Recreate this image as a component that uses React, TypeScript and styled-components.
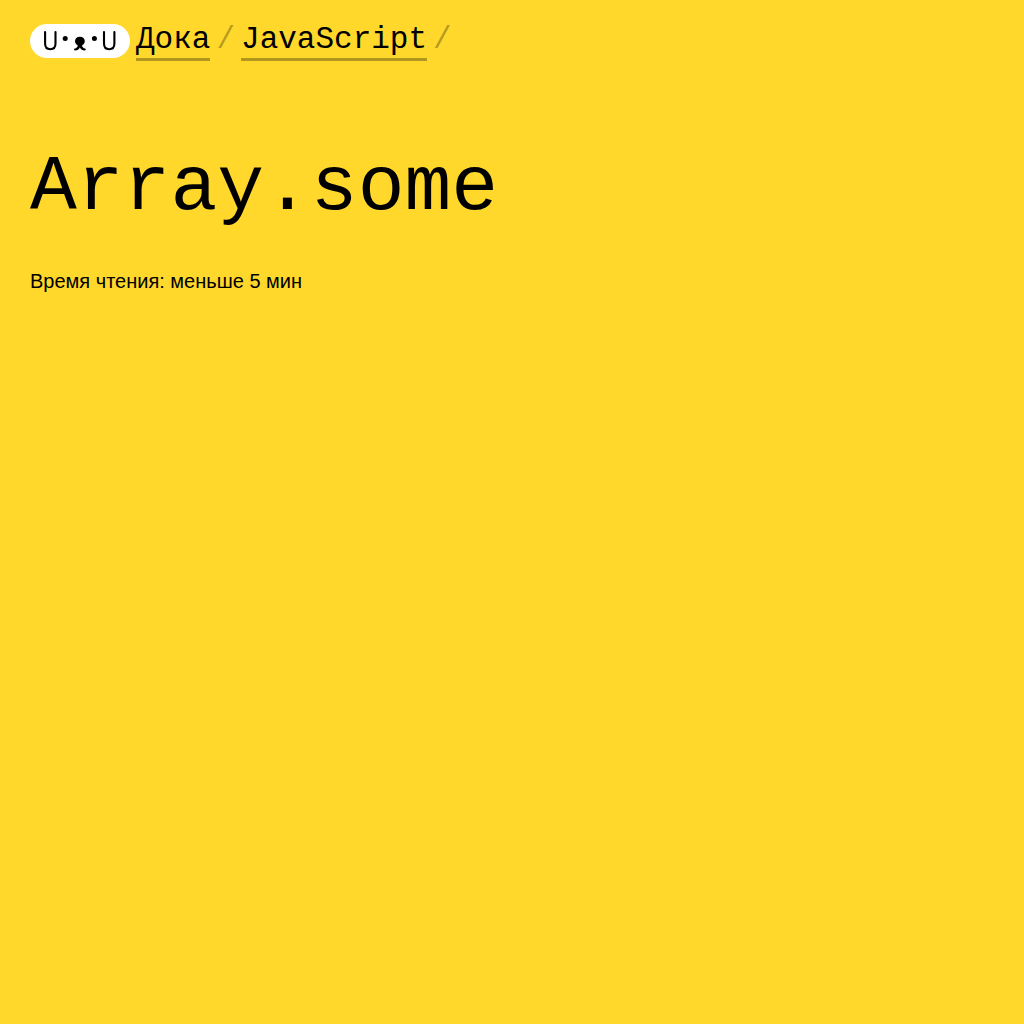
import React from "react";
import styled, { createGlobalStyle } from "styled-components";

const GlobalStyle = createGlobalStyle`
  *, *::before, *::after { box-sizing: border-box; }
  body {
    margin: 0;
    background: #ffd82b;
    color: #000;
    font-family: "Liberation Sans", Arial, sans-serif;
  }
`;

const Page = styled.div`
  min-height: 100vh;
  padding: 24px 30px;
`;

const Breadcrumbs = styled.nav`
  display: flex;
  flex-wrap: wrap;
  align-items: flex-start;
  gap: 6px;
  font-family: "Liberation Mono", "Courier New", monospace;
  font-size: 31px;
  line-height: 32px;
`;

const LogoLink = styled.a`
  display: flex;
  width: 100px;
  height: 34px;
  border-radius: 17px;
  background: #fff;
  color: #000;
`;

const Crumb = styled.a`
  padding-bottom: 2px;
  color: inherit;
  text-decoration: none;
  border-bottom: 3px solid rgba(0, 0, 0, 0.3);
`;

const Separator = styled.span`
  color: rgba(0, 0, 0, 0.3);
`;

const Title = styled.h1`
  margin: 83px 0 0;
  font-family: "Liberation Mono", "Courier New", monospace;
  font-size: 78px;
  line-height: 88px;
  font-weight: 400;
`;

const ReadingTime = styled.p`
  margin: 34px 0 0;
  font-size: 20px;
  line-height: 30px;
`;

function Logo() {
  return (
    <svg width="100" height="34" viewBox="0 0 100 34" fill="none" aria-hidden="true">
      <g stroke="currentColor" strokeWidth="2.1" strokeLinecap="round">
        <path d="M15.1 8.1V19.6C15.1 23 17 25.3 20.3 25.3S25.5 23 25.5 19.6V8.1" />
        <path d="M74 8.1V19.6C74 23 75.9 25.3 79.2 25.3S84.4 23 84.4 19.6V8.1" />
      </g>
      <g fill="currentColor">
        <circle cx="35.2" cy="14.4" r="2.5" />
        <circle cx="64.4" cy="14.4" r="2.5" />
        <path d="M49.9 12.8C53 12.8 54.8 14.8 54.8 17.2C54.8 19.2 53.4 20.4 52 21.5C52.4 23.3 53.4 24.2 55.1 24.5C56.2 24.8 55.9 26.6 54.7 26.6C52.4 26.5 50.8 25.4 49.9 23.6C49 25.4 47.4 26.5 45.1 26.6C43.9 26.6 43.6 24.8 44.7 24.5C46.4 24.2 47.4 23.3 47.8 21.5C46.4 20.4 45 19.2 45 17.2C45 14.8 46.8 12.8 49.9 12.8Z" />
      </g>
    </svg>
  );
}

const crumbs = [
  { label: "Дока", href: "/" },
  { label: "JavaScript", href: "/js/" },
];

export default function App() {
  return (
    <>
      <GlobalStyle />
      <Page>
        <Breadcrumbs>
          <LogoLink href="/" aria-label="Дока">
            <Logo />
          </LogoLink>
          {crumbs.map((crumb) => (
            <React.Fragment key={crumb.href}>
              <Crumb href={crumb.href}>{crumb.label}</Crumb>
              <Separator aria-hidden="true">/</Separator>
            </React.Fragment>
          ))}
        </Breadcrumbs>
        <main>
          <Title>Array.some</Title>
          <ReadingTime>Время чтения: меньше 5 мин</ReadingTime>
        </main>
      </Page>
    </>
  );
}
